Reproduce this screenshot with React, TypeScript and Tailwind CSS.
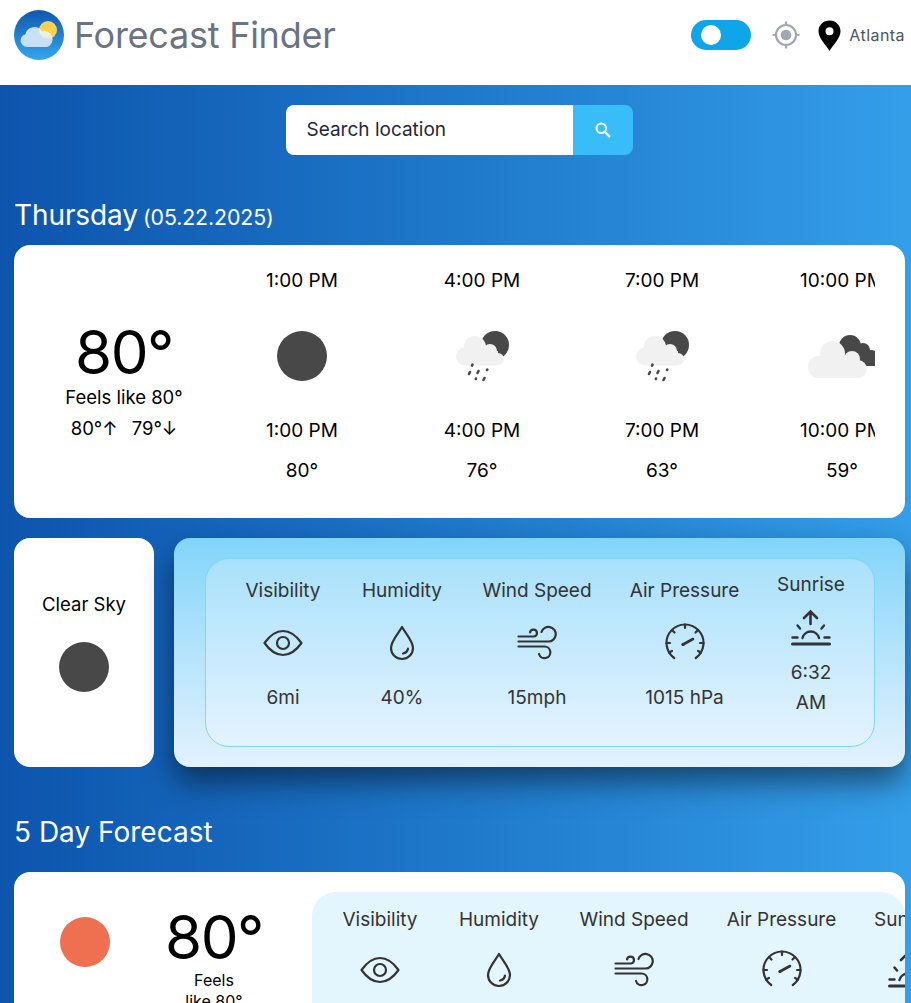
import React from 'react';

const DARK = '#484848';
const CLOUD = '#f1f1f1';

const Logo = () => (
  <svg width="50" height="50" viewBox="0 0 50 50">
    <defs>
      <linearGradient id="logoBg" x1="0" y1="0" x2="0" y2="1">
        <stop offset="0" stopColor="#0f58ae" />
        <stop offset="1" stopColor="#35a6ee" />
      </linearGradient>
      <linearGradient id="logoCloud" x1="0" y1="0" x2="0" y2="1">
        <stop offset="0" stopColor="#ffffff" stopOpacity="0.75" />
        <stop offset="1" stopColor="#c4def5" />
      </linearGradient>
    </defs>
    <circle cx="25" cy="25" r="25" fill="url(#logoBg)" />
    <circle cx="34" cy="20" r="9" fill="#fbd24e" />
    <path
      d="M13 37A6.5 6.5 0 0 1 11.5 24.2A9 9 0 0 1 28 21.5A8 8 0 0 1 33 37Z"
      fill="url(#logoCloud)"
    />
  </svg>
);

const Toggle = () => (
  <div className="w-[60px] h-[30px] rounded-full bg-[#0ea5e9] flex items-center pl-[10px]">
    <div className="w-[20px] h-[20px] rounded-full bg-white" />
  </div>
);

const LocateIcon = () => (
  <svg width="28" height="28" viewBox="0 0 28 28" fill="none" stroke="#a0a6b3" strokeWidth="2.2">
    <circle cx="14" cy="14" r="10" />
    <circle cx="14" cy="14" r="5.3" fill="#a0a6b3" stroke="none" />
    <path d="M14 0.5V4M14 24V27.5M0.5 14H4M24 14H27.5" />
  </svg>
);

const PinIcon = () => (
  <svg width="23" height="31" viewBox="0 0 23 31">
    <path
      fillRule="evenodd"
      d="M11.5 0.5C5.2 0.5 0.5 5.3 0.5 11.3C0.5 18.5 8 25 11.5 31C15 25 22.5 18.5 22.5 11.3C22.5 5.3 17.8 0.5 11.5 0.5ZM11.5 7.3A4 4 0 1 1 11.5 15.3A4 4 0 1 1 11.5 7.3Z"
      fill="#000"
    />
  </svg>
);

const SearchIcon = () => (
  <svg width="18" height="18" viewBox="0 0 18 18" fill="none" stroke="#fff" strokeWidth="2">
    <circle cx="7.3" cy="7.3" r="4.8" />
    <path d="M11 11L16 16" strokeWidth="2.2" />
  </svg>
);

const SolidSun = () => (
  <svg width="70" height="70" viewBox="0 0 70 70">
    <circle cx="35" cy="35" r="25" fill={DARK} />
  </svg>
);

const RainNight = () => (
  <svg width="70" height="70" viewBox="0 0 70 70">
    <circle cx="48" cy="24" r="14" fill={DARK} />
    <g fill={CLOUD}>
      <circle cx="18" cy="35.5" r="9" />
      <circle cx="28" cy="26" r="11" />
      <circle cx="43" cy="30" r="7" />
      <circle cx="51" cy="38" r="6" />
      <rect x="18" y="30" width="33" height="14.5" />
    </g>
    <g stroke={DARK} strokeWidth="2.6" strokeLinecap="round">
      <path d="M25.5 43.6L25 44.6" />
      <path d="M23 51L22 53" />
      <path d="M31.5 50L30.5 52" />
      <path d="M40.3 48.5L40 49" />
      <path d="M29 57.5L28.8 58" />
      <path d="M37.5 57L36.5 59" />
    </g>
  </svg>
);

const CloudyNight = () => (
  <svg width="70" height="70" viewBox="0 0 70 70">
    <g fill={DARK}>
      <circle cx="43" cy="25" r="11" />
      <circle cx="56" cy="29" r="7" />
      <circle cx="64" cy="37" r="8" />
      <rect x="40" y="30" width="30" height="15" />
    </g>
    <g fill={CLOUD}>
      <circle cx="12" cy="46" r="11" />
      <circle cx="25.5" cy="32.5" r="12.5" />
      <circle cx="45" cy="38" r="8" />
      <circle cx="51" cy="48" r="9" />
      <rect x="12" y="36" width="39" height="21" />
    </g>
  </svg>
);

const EyeIcon = () => (
  <svg width="40" height="40" viewBox="0 0 40 40" fill="none" stroke="#333" strokeWidth="2.2">
    <path d="M1.5 20Q10 8 20 8Q30 8 38.5 20Q30 32 20 32Q10 32 1.5 20Z" strokeLinejoin="round" />
    <circle cx="20" cy="20" r="6" />
  </svg>
);

const DropIcon = () => (
  <svg width="40" height="40" viewBox="0 0 40 40" fill="none" stroke="#333" strokeWidth="2.2" strokeLinecap="round">
    <path d="M20 4C24 11 31 18 31 25A11 11 0 0 1 9 25C9 18 16 11 20 4Z" strokeLinejoin="round" />
    <path d="M26 25.5A6 6 0 0 1 21 30.5" />
  </svg>
);

const WindIcon = () => (
  <svg width="40" height="40" viewBox="0 0 40 40" fill="none" stroke="#333" strokeWidth="2.2" strokeLinecap="round">
    <path d="M1.5 13.5H17A3.5 3.5 0 1 0 13 9.5" />
    <path d="M1.5 18.5H31.5A7.3 7.3 0 1 0 24.5 9" />
    <path d="M1.5 23.5H27.5A5.8 5.8 0 1 1 22 31" />
  </svg>
);

const GaugeIcon = () => (
  <svg width="40" height="40" viewBox="0 0 40 40" fill="none" stroke="#333" strokeWidth="2.2" strokeLinecap="round">
    <path d="M9.2 35A18.5 18.5 0 1 1 30.8 35" />
    <path d="M20 1.5V5M7 7L9.5 9.5M33 7L30.5 9.5M1.5 20H5M38.5 20H35M4 29.5L7 28M36 29.5L33 28" />
    <path d="M18 21.5L28 16" strokeWidth="2.6" />
    <circle cx="18" cy="21.5" r="1.6" fill="#333" stroke="none" />
  </svg>
);

const SunriseIcon = () => (
  <svg width="40" height="40" viewBox="0 0 40 40" fill="none" stroke="#333" strokeWidth="2.4" strokeLinecap="round">
    <path d="M19.5 16V3.5M13 10L19.5 3.5L26 10" strokeWidth="2.6" />
    <path d="M6.5 17.5L9 20.5M33 17.5L30.5 20.5" />
    <path d="M1.5 29.5H6.5M33.5 29.5H38.5" />
    <path d="M11.5 30A8.5 8.5 0 0 1 28 30" />
    <path d="M1.5 36H38.5" strokeWidth="3" />
  </svg>
);

const HOURS = [
  { time: '1:00 PM', temp: '80°', icon: <SolidSun /> },
  { time: '4:00 PM', temp: '76°', icon: <RainNight /> },
  { time: '7:00 PM', temp: '63°', icon: <RainNight /> },
  { time: '10:00 PM', temp: '59°', icon: <CloudyNight /> },
];

const DETAILS = [
  { label: 'Visibility', value: '6mi', icon: <EyeIcon />, width: 'w-[76px]' },
  { label: 'Humidity', value: '40%', icon: <DropIcon />, width: 'w-[82px]' },
  { label: 'Wind Speed', value: '15mph', icon: <WindIcon />, width: 'w-[108px]' },
  { label: 'Air Pressure', value: '1015 hPa', icon: <GaugeIcon />, width: 'w-[107px]' },
  { label: 'Sunrise', value: '6:32 AM', icon: <SunriseIcon />, width: 'w-[66px]' },
];

// the top panel wraps the Sunrise time and centres the column; the 5 day panel just clips it
const DetailRow = ({ compact }: { compact?: boolean }) => (
  <div className={`flex gap-10 text-[19px] leading-[28px] text-[#333] ${compact ? 'items-center' : 'items-start'}`}>
    {DETAILS.map((d) => {
      const squeezed = compact && d.label === 'Sunrise';
      return (
        <div key={d.label} className={`flex flex-col items-center shrink-0 ${d.width}`}>
          <span className="whitespace-nowrap">{d.label}</span>
          <div className={squeezed ? 'mt-[9px]' : compact ? 'mt-[18px]' : 'mt-[16px]'}>{d.icon}</div>
          <span className={`text-center ${squeezed ? 'mt-[10px] leading-[30px]' : 'mt-[21px] whitespace-nowrap'}`}>
            {d.value}
          </span>
        </div>
      );
    })}
  </div>
);

export default function App() {
  return (
    <div className="h-screen overflow-hidden font-['Inter',sans-serif] bg-white">
      {/* Header */}
      <header className="h-[85px] flex items-start justify-between pl-[14px] pr-[6px] pt-[10px]">
        <div className="flex items-center gap-[10px]">
          <Logo />
          <h1 className="text-[36px] leading-[50px] text-[#6b7280] tracking-[-0.25px]">Forecast Finder</h1>
        </div>
        <div className="flex items-center h-[50px]">
          <Toggle />
          <div className="ml-[21px]">
            <LocateIcon />
          </div>
          <div className="ml-[18px]">
            <PinIcon />
          </div>
          <span className="ml-[8px] text-[16px] tracking-[0.45px] text-[#4b5563]">Atlanta</span>
        </div>
      </header>

      <main className="h-[918px] bg-linear-to-r from-[#0d54ad] to-[#349ee9] pl-[14px] pr-[6px] pt-[20px]">
        {/* Search */}
        <div className="flex justify-center">
          <div className="flex w-[347px] h-[50px] ml-[-1px]">
            <div className="flex-1 bg-white rounded-l-lg flex items-center pl-[21px] pt-[1px] text-[19px] text-[#1f2937]">
              Search location
            </div>
            <button className="w-[60px] bg-[#38bdf8] rounded-r-lg flex items-center justify-center">
              <SearchIcon />
            </button>
          </div>
        </div>

        <h2 className="mt-[40px] text-white text-[28px] leading-[40px] tracking-[-0.1px]">
          Thursday<span className="ml-[5px] text-[21.3px]">(05.22.2025)</span>
        </h2>

        {/* Today */}
        <section className="mt-[8px] h-[273px] bg-white rounded-2xl flex">
          <div className="w-[198px] pl-[22px] flex flex-col items-center pt-[75px] text-black shrink-0">
            <div className="text-[60px] leading-[64px] tracking-[-1.5px]">80°</div>
            <div className="text-[18.5px] leading-[26px]">Feels like 80°</div>
            <div className="text-[18.5px] leading-[26px] mt-[5px] flex gap-[14px]">
              <span>80°↑</span>
              <span>79°↓</span>
            </div>
          </div>
          <div className="w-[663px] overflow-hidden flex pt-[22px]">
            {HOURS.map((h) => (
              <div key={h.time} className="w-[180px] shrink-0 flex flex-col items-center text-[19px] leading-[28px] text-black">
                <span className="whitespace-nowrap">{h.time}</span>
                <div className="mt-[26px]">{h.icon}</div>
                <span className="mt-[26px] whitespace-nowrap">{h.time}</span>
                <span className="mt-[12px]">{h.temp}</span>
              </div>
            ))}
          </div>
        </section>

        {/* Current conditions */}
        <div className="mt-[20px] flex gap-[20px] h-[229px]">
          <div className="w-[140px] bg-white rounded-2xl flex flex-col items-center pt-[52px] text-[18.5px] leading-[28px] text-black">
            <span>Clear Sky</span>
            <div className="mt-[24px] w-[50px] h-[50px] rounded-full bg-[#484848]" />
          </div>
          <div className="flex-1 rounded-2xl bg-linear-to-b from-[#81d4fa] to-[#e3f2fd] px-[30px] py-[20px] shadow-[0_15px_30px_rgba(0,0,0,0.5)]">
            <div className="h-full ml-[1px] rounded-3xl border border-[#81d4fa] bg-white/25 pl-[39px] pb-[16px] flex items-center overflow-hidden">
              <DetailRow compact />
            </div>
          </div>
        </div>

        <h2 className="mt-[45px] text-white text-[28px] leading-[40px]">5 Day Forecast</h2>

        {/* 5 day */}
        <section className="mt-[20px] h-[300px] bg-white rounded-2xl flex overflow-hidden pt-[20px] pl-[46px]">
          <div className="w-[50px] h-[50px] rounded-full bg-[#ee7050] mt-[25px] shrink-0" />
          <div className="w-[100px] ml-[54px] flex flex-col items-center text-black shrink-0">
            <div className="text-[60px] leading-[64px] tracking-[-1.5px] mt-[13px]">80°</div>
            <div className="text-[16px] leading-[21px] text-center mt-[1px]">
              Feels
              <br />
              like 80°
            </div>
          </div>
          <div className="ml-[48px] flex-1 min-w-0 rounded-t-3xl bg-[#e3f5fd] pl-[30px] pt-[14px] overflow-hidden">
            <DetailRow />
          </div>
        </section>
      </main>
    </div>
  );
}
